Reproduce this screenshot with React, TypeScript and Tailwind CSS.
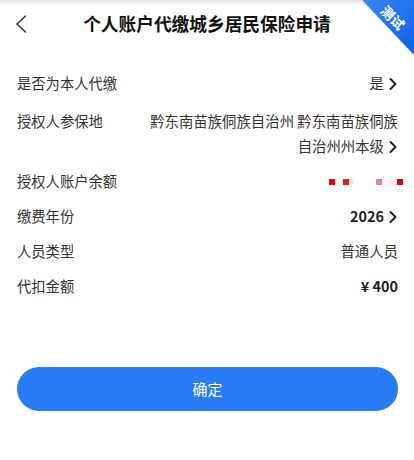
import React from "react";

const font = {
  fontFamily: '"Noto Sans CJK SC", "Noto Sans", sans-serif',
};

const Chevron = () => (
  <svg
    width="10"
    height="14"
    viewBox="0 0 10 14"
    className="inline-block ml-[4px] -mt-[2px] align-middle"
  >
    <path
      d="M2.5 2 L7.5 7 L2.5 12"
      fill="none"
      stroke="#222"
      strokeWidth="2"
      strokeLinecap="round"
      strokeLinejoin="round"
    />
  </svg>
);

const Row = ({
  label,
  children,
  className = "",
}: {
  label: string;
  children: React.ReactNode;
  className?: string;
}) => (
  <div
    className={`flex justify-between items-start pl-[17px] pr-[16px] py-[5px] ${className}`}
  >
    <div className="text-[14.3px] leading-[25px] text-[#333] shrink-0">
      {label}
    </div>
    <div className="text-[14.4px] leading-[25px] text-[#333] text-right">
      {children}
    </div>
  </div>
);

const App = () => {
  return (
    <div
      className="relative w-[414px] h-[460px] bg-white overflow-hidden"
      style={font}
    >
      {/* top shade */}
      <div className="h-[6px] bg-gradient-to-b from-[#e4e4e4] to-white" />

      {/* header */}
      <div className="relative flex items-center justify-center h-[32px] -mt-[6px] pt-[6px] box-content">
        <div className="absolute left-[14px] top-[14px]">
          <svg width="14" height="20" viewBox="0 0 14 20">
            <path
              d="M11.5 2 L3 10 L11.5 18"
              fill="none"
              stroke="#333"
              strokeWidth="1.6"
              strokeLinecap="round"
              strokeLinejoin="round"
            />
          </svg>
        </div>
        <h1 className="text-[17.7px] leading-[28px] font-bold text-[#111] mt-[2px]">
          个人账户代缴城乡居民保险申请
        </h1>
      </div>

      {/* test badge */}
      <div className="absolute top-0 right-0 w-[52px] h-[55px] bg-gradient-to-br from-[#3a86f5] to-[#0b5fe6] [clip-path:polygon(0_0,100%_0,100%_100%)]">
        <div className="absolute left-[17px] top-[10px] w-[28px] text-center rotate-45 text-white text-[13.5px] leading-[15px] font-semibold">
          测试
        </div>
      </div>

      {/* form rows */}
      <div className="mt-[27px]">
        <Row label="是否为本人代缴">
          是<Chevron />
        </Row>
        <Row label="授权人参保地" className="mt-[3px]">
          黔东南苗族侗族自治州 黔东南苗族侗族
          <br />
          自治州州本级
          <Chevron />
        </Row>
        <Row label="授权人账户余额">
          <div className="flex items-center justify-end h-[25px] pt-[2px]">
            <span className="w-[6px] h-[6px] bg-[#e30000]" />
            <span className="w-[6px] h-[6px] bg-[#e41b1b] ml-[8px]" />
            <span className="w-[4px] h-[6px] bg-[#f6dede]" />
            <span className="w-[6px] h-[6px] bg-[#d98a98] ml-[23px]" />
            <span className="w-[8px] h-[6px] bg-[#fbeeee] ml-[4px]" />
            <span className="w-[6px] h-[6px] bg-[#e30000] ml-[3px] mr-[-5px]" />
          </div>
        </Row>
        <Row label="缴费年份">
          <span className="font-bold text-[#222]">2026</span>
          <Chevron />
        </Row>
        <Row label="人员类型">普通人员</Row>
        <Row label="代扣金额">
          <span className="font-bold text-[#222]">¥ 400</span>
        </Row>
      </div>

      {/* confirm button */}
      <div className="px-[17px] mt-[64px]">
        <button className="w-[381px] h-[44px] rounded-full bg-[#2b7bf6] text-white text-[15px]">
          确定
        </button>
      </div>
    </div>
  );
};

export default App;
